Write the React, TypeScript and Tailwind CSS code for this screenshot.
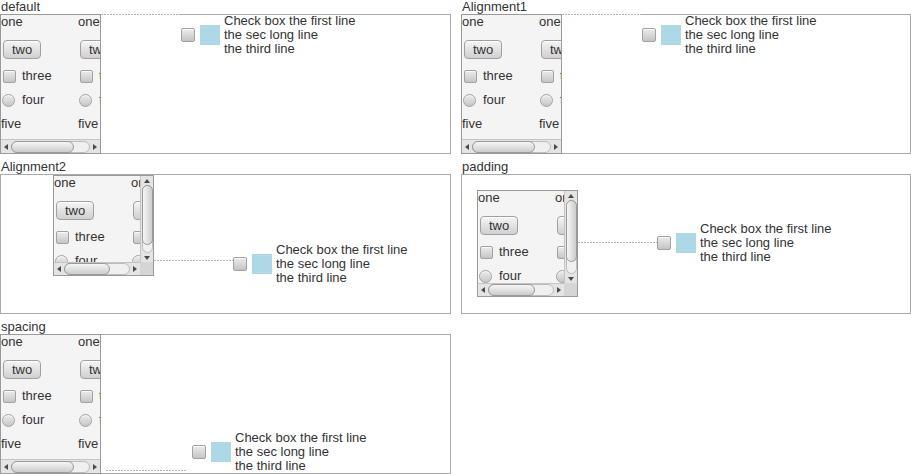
import React from "react";

type PaneProps = {
  className: string;
  vbar?: boolean;
  hThumb: string;
  vThumb?: string;
};

function Arrow({ dir }: { dir: "left" | "right" | "up" | "down" }) {
  const d = {
    left: "M4 0 L0 3 L4 6 Z",
    right: "M0 0 L4 3 L0 6 Z",
    up: "M0 4 L3 0 L6 4 Z",
    down: "M0 0 L6 0 L3 4 Z",
  }[dir];
  const vertical = dir === "up" || dir === "down";
  return (
    <svg width={vertical ? 6 : 4} height={vertical ? 4 : 6} viewBox={vertical ? "0 0 6 4" : "0 0 4 6"}>
      <path d={d} fill="#4a4a4a" />
    </svg>
  );
}

function Box({ round }: { round?: boolean }) {
  return (
    <div
      className={
        round
          ? "h-[13px] w-[13px] shrink-0 rounded-full border border-[#a2a2a2] bg-linear-to-b from-[#ececec] to-[#c6c6c6] shadow-[inset_0_1px_0_#fafafa]"
          : "h-[13px] w-[13px] shrink-0 rounded-[2px] border border-[#a2a2a2] bg-linear-to-b from-[#ececec] to-[#c6c6c6] shadow-[inset_0_1px_0_#fafafa]"
      }
    />
  );
}

function Column() {
  return (
    <div className="flex w-[77px] shrink-0 flex-col">
      <div className="h-[14px] leading-[14px]">one</div>
      <div className="ml-[2px] mt-[11px] flex h-[19px] w-[38px] items-center justify-center rounded-[4px] border border-[#a0a0a0] bg-linear-to-b from-[#f5f5f5] to-[#d0d0d0] leading-none shadow-[inset_0_1px_0_#fff]">
        two
      </div>
      <div className="ml-[2px] mt-[10px] flex h-[14px] items-center">
        <Box />
        <span className="ml-[6px] leading-[14px]">three</span>
      </div>
      <div className="ml-[1px] mt-[10px] flex h-[14px] items-center">
        <Box round />
        <span className="ml-[7px] leading-[14px]">four</span>
      </div>
      <div className="mt-[10px] h-[14px] leading-[14px]">five</div>
    </div>
  );
}

function ScrollPane({ className, vbar, hThumb, vThumb }: PaneProps) {
  return (
    <div className={`relative shrink-0 overflow-hidden border border-[#9a9a9a] bg-[#f4f4f4] ${className}`}>
      <div className="flex">
        <Column />
        <Column />
      </div>
      <div
        className={
          vbar
            ? "absolute bottom-0 left-0 right-[13px] flex h-[13px] items-center border-t border-[#c4c4c4] bg-[#e4e4e4]"
            : "absolute bottom-0 left-0 right-0 flex h-[14px] items-center border-t border-[#c4c4c4] bg-[#e4e4e4]"
        }
      >
        <div className="flex w-[10px] shrink-0 justify-center">
          <Arrow dir="left" />
        </div>
        <div className="flex h-[12px] flex-1 rounded-full border border-[#bcbcbc] bg-[#f0f0f0]">
          <div className={`-my-px -ml-px h-[12px] rounded-full border border-[#9a9a9a] bg-linear-to-b from-[#f6f6f6] to-[#cdcdcd] ${hThumb}`} />
        </div>
        <div className="flex w-[10px] shrink-0 justify-center">
          <Arrow dir="right" />
        </div>
      </div>
      {vbar && (
        <>
          <div className="absolute bottom-[13px] right-0 top-0 flex w-[13px] flex-col items-center border-l border-[#c4c4c4] bg-[#e4e4e4]">
            <div className="flex h-[9px] shrink-0 items-center justify-center">
              <Arrow dir="up" />
            </div>
            <div className="flex w-[11px] flex-1 flex-col rounded-full border border-[#bcbcbc] bg-[#f0f0f0]">
              <div className={`-mx-px -mt-px w-[11px] rounded-full border border-[#9a9a9a] bg-linear-to-r from-[#f6f6f6] to-[#cdcdcd] ${vThumb}`} />
            </div>
            <div className="flex h-[9px] shrink-0 items-center justify-center">
              <Arrow dir="down" />
            </div>
          </div>
          <div className="absolute bottom-0 right-0 h-[13px] w-[13px] bg-[#d5d5d5]" />
        </>
      )}
    </div>
  );
}

function Dashed({ className }: { className: string }) {
  return (
    <div
      className={`h-px shrink-0 bg-[repeating-linear-gradient(90deg,#b4b4b4_0_2px,#ffffff_2px_3px)] ${className}`}
    />
  );
}

function Group({ className }: { className?: string }) {
  return (
    <div className={`flex shrink-0 items-center ${className ?? ""}`}>
      <div className="h-[14px] w-[14px] rounded-[2px] border border-[#a2a2a2] bg-linear-to-b from-[#ececec] to-[#c4c4c4] shadow-[inset_0_1px_0_#fafafa]" />
      <div className="ml-[5px] h-[20px] w-[20px] bg-[#add8e6]" />
      <div className="ml-[4px] leading-[14px]">
        <div>Check box the first line</div>
        <div>the sec long line</div>
        <div>the third line</div>
      </div>
    </div>
  );
}

function Section({ title, children, className }: { title: string; children: React.ReactNode; className: string }) {
  return (
    <div className="flex flex-col">
      <div className="h-[14px] pl-[1px] leading-[14px]">{title}</div>
      <div className={`flex h-[140px] overflow-hidden bg-white shadow-[inset_0_0_0_1px_#aaaaaa] ${className}`}>
        {children}
      </div>
    </div>
  );
}

function TopRow() {
  return (
    <>
      <ScrollPane className="h-[140px] w-[101px]" hThumb="w-[63px]" />
      <Dashed className="w-[80px]" />
      <Group />
    </>
  );
}

export default function App() {
  return (
    <div className="grid h-[474px] w-[911px] grid-cols-[451px_450px] gap-x-[10px] gap-y-[6px] bg-white text-[13px] text-[#333] [font-family:'Liberation_Sans',Arial,sans-serif]">
      <Section title="default" className="items-start">
        <TopRow />
      </Section>
      <Section title="Alignment1" className="items-start">
        <TopRow />
      </Section>
      <Section title="Alignment2" className="items-start">
        <ScrollPane className="ml-[53px] mt-[1px] h-[101px] w-[101px]" vbar hThumb="w-[46px]" vThumb="h-[60px]" />
        <Dashed className="mt-[86px] w-[79px]" />
        <Group className="mt-[69px]" />
      </Section>
      <Section title="padding" className="items-start">
        <ScrollPane className="ml-[16px] mt-[16px] h-[107px] w-[101px]" vbar hThumb="w-[47px]" vThumb="h-[62px]" />
        <Dashed className="mt-[68px] w-[79px]" />
        <Group className="mt-[48px]" />
      </Section>
      <Section title="spacing" className="items-end">
        <ScrollPane className="h-[140px] w-[101px]" hThumb="w-[63px]" />
        <Dashed className="mb-[3px] ml-[5px] w-[80px]" />
        <Group className="mb-px ml-[6px]" />
      </Section>
    </div>
  );
}
